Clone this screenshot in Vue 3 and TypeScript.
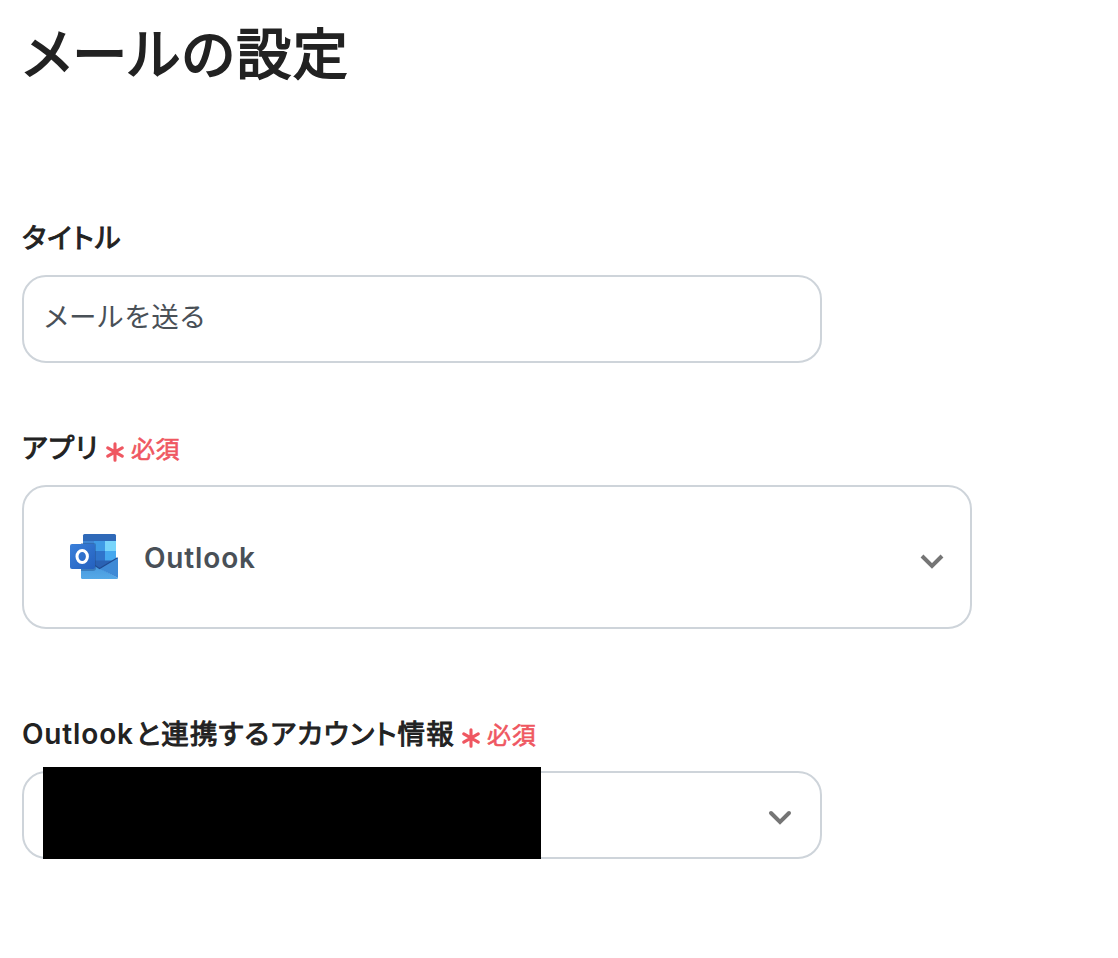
<script setup lang="ts">
const title: string = 'メールの設定'
const required: string = '必須'
</script>

<template>
  <main class="page">
    <h1 class="heading">{{ title }}</h1>

    <section class="field field-title">
      <div class="label"><span class="label-text">タイトル</span></div>
      <div class="box input"><span class="value">メールを送る</span></div>
    </section>

    <section class="field field-app">
      <div class="label">
        <span class="label-text">アプリ</span>
        <svg class="star" width="18" height="20" viewBox="0 0 18 20"><path d="M9 1.7V18.3M1.8 5.8L16.2 14.2M16.2 5.8L1.8 14.2" /></svg>
        <span class="required">{{ required }}</span>
      </div>
      <div class="box app-select">
        <svg class="outlook" width="50" height="48" viewBox="0 0 50 48">
          <defs>
            <linearGradient id="badge" x1="0" y1="0" x2="1" y2="1">
              <stop offset="0" stop-color="#3a80da" />
              <stop offset="1" stop-color="#2460be" />
            </linearGradient>
            <linearGradient id="envelope" x1="0" y1="0" x2="0" y2="1">
              <stop offset="0" stop-color="#3f8fd9" />
              <stop offset="1" stop-color="#55a9e7" />
            </linearGradient>
          </defs>
          <path fill="#2f69b8" d="M15.5 1H45.5A1.5 1.5 0 0 1 47 2.5V8H14V2.5A1.5 1.5 0 0 1 15.5 1Z" />
          <path fill="#2f74cb" d="M14 8H47V28L32 37L14 30Z" />
          <path fill="#3f86d4" d="M14 8H25V18H14Z" />
          <path fill="#3f9be6" d="M25 8H36V18H25Z" />
          <path fill="#78d5fb" d="M36 8H47V18H36Z" />
          <path fill="#45a8ef" d="M36 18H47V28H36Z" />
          <path fill="#2a62b4" d="M25 27.5H43L32 36L25 32Z" />
          <path fill="url(#envelope)" d="M12 25L49 45V45.5L47.5 46H13.5A1.5 1.5 0 0 1 12 44.5Z" />
          <path fill="#3f8ad6" d="M49 24.5V45L30 35.5Z" />
          <path fill="none" stroke="#204a91" stroke-width="1.2" d="M26 32.5L30.5 35.5L48.5 24.8" />
          <path fill="#204b88" opacity=".4" d="M12 10H25A2 2 0 0 1 27 12V35A3 3 0 0 1 24 38H12Z" />
          <rect x="1" y="11" width="25" height="25" rx="2" fill="url(#badge)" />
          <ellipse cx="13.2" cy="23.5" rx="5.2" ry="5.9" fill="none" stroke="#fff" stroke-width="3" />
        </svg>
        <span class="app-name">Outlook</span>
        <svg class="chevron" width="24" height="16" viewBox="0 0 24 16"><path d="M2 2L12 12L22 2" /></svg>
      </div>
    </section>

    <section class="field field-account">
      <div class="label">
        <span class="label-text"><span class="latin">Outlook</span>と連携するアカウント情報</span>
        <svg class="star" width="18" height="20" viewBox="0 0 18 20"><path d="M9 1.7V18.3M1.8 5.8L16.2 14.2M16.2 5.8L1.8 14.2" /></svg>
        <span class="required">{{ required }}</span>
      </div>
      <div class="box account-select">
        <div class="redaction"></div>
        <svg class="chevron round" width="24" height="16" viewBox="0 0 24 16"><path d="M3 3L12 12L21 3" /></svg>
      </div>
    </section>
  </main>
</template>

<style>
body {
  background: #fff;
}
</style>

<style scoped>
.page {
  box-sizing: border-box;
  width: 1118px;
  height: 958px;
  padding: 14px 22px 0;
  overflow: hidden;
  font-family: Inter, "Noto Sans CJK JP", sans-serif;
  font-feature-settings: "palt";
  color: #222;
}
.heading {
  margin: 0;
  height: 80px;
  padding-left: 1px;
  font-size: 55px;
  line-height: 80px;
  font-weight: 400;
  letter-spacing: 0.029em;
  -webkit-text-stroke: 1.8px #222;
  white-space: nowrap;
}
.field-title { margin-top: 124px; }
.field-app { margin-top: 66px; }
.field-account { margin-top: 86px; }
.label {
  display: flex;
  height: 40px;
  margin-bottom: 17px;
  line-height: 40px;
  white-space: nowrap;
}
.field-app .label,
.field-account .label { margin-bottom: 16px; }
.label-text {
  font-size: 27.5px;
  line-height: 38px;
  font-weight: 400;
  letter-spacing: 0.042em;
  -webkit-text-stroke: 1px #222;
}
.field-title .label-text { line-height: 40px; }
.latin {
  margin-right: 2px;
  font-size: 28px;
  font-weight: 600;
  letter-spacing: 0.03em;
  -webkit-text-stroke: 0;
}
.star {
  margin: 13px 0 0 7px;
  fill: none;
  stroke: #ef5761;
  stroke-width: 3.1;
  stroke-linecap: round;
}
.required {
  margin: 1px 0 0 7px;
  font-size: 24px;
  font-weight: 400;
  letter-spacing: 0.03em;
  color: #ef5761;
  -webkit-text-stroke: 0.6px #ef5761;
}
.box {
  box-sizing: border-box;
  display: flex;
  align-items: center;
  border: 2px solid #ced4da;
  border-radius: 24px;
}
.input {
  width: 800px;
  height: 88px;
  padding: 0 20px 9px;
}
.value {
  font-size: 27.5px;
  letter-spacing: 0.046em;
  color: #495057;
}
.app-select {
  width: 950px;
  height: 144px;
  padding: 0 26px 0 45px;
}
.app-name {
  margin: 1px 0 0 25px;
  font-size: 28px;
  font-weight: 600;
  letter-spacing: 0.03em;
  color: #495057;
}
.chevron {
  margin-left: auto;
  margin-top: 9px;
  fill: none;
  stroke: #757575;
  stroke-width: 4;
}
.round {
  stroke-linecap: round;
  margin-top: 5px;
}
.account-select {
  width: 800px;
  height: 88px;
  padding: 0 28px 0 19px;
}
.redaction {
  flex: none;
  width: 498px;
  height: 92px;
  margin-top: -4px;
  background: #000;
}
</style>
